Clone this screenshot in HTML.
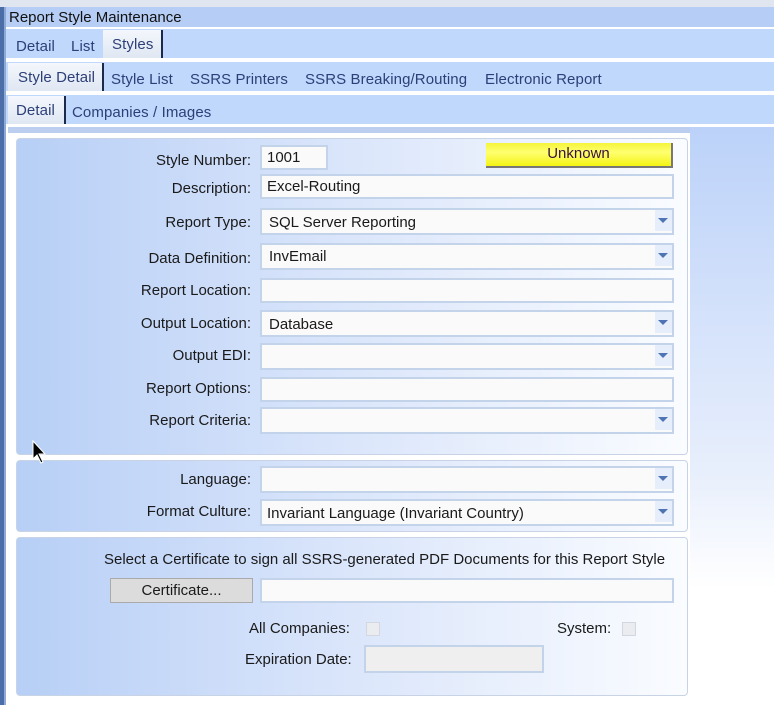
<!DOCTYPE html>
<html><head><style>
*{margin:0;padding:0;box-sizing:border-box}
body{width:774px;height:705px;position:relative;overflow:hidden;background:#fff;font-family:"Liberation Sans",sans-serif;font-size:15px;color:#1a1a1a}
.a{position:absolute}
.tabrow{position:absolute;left:6px;right:0;background:#bfd8fc}
.t{position:absolute;color:#2d3f78;font-size:15px;white-space:nowrap;letter-spacing:0.1px}
.sel{position:absolute;background:linear-gradient(#f4f7fc,#dfe7f3);border-right:2px solid #1c2a4a}
.panel{position:absolute;left:16px;width:672px;border:1px solid #c8d4e6;border-radius:4px;background:linear-gradient(90deg,#b7cff6 0%,#dbe6fb 50%,#fafcff 100%)}
.lbl{position:absolute;right:523px;text-align:right;white-space:nowrap;font-size:15px}
.in{position:absolute;background:#fafafa;border:2px solid #c3d3ea;height:25px;padding:2px 0 0 5px;font-size:15px;white-space:nowrap}
.dd::after{content:"";position:absolute;right:0;top:0;width:17px;height:21px;background:#e6eefb}
.dd::before{content:"";position:absolute;right:4px;top:8px;border-left:5px solid transparent;border-right:5px solid transparent;border-top:5px solid #4e74b4;z-index:1}
.cb{position:absolute;width:14px;height:14px;border:1px solid #d3d8e0;background:#eaecef}
</style></head><body>
<div class="a" style="left:0;top:0;width:774px;height:7px;background:#dfe6f0"></div>
<div class="a" style="left:0;top:7px;width:6px;height:698px;background:#4c6ea8;border-right:2px solid #8ea9d6"></div>
<div class="a" style="left:6px;top:7px;width:768px;height:20px;background:#b6cdf5"></div>
<div class="a" style="left:9px;top:9px;font-size:15px;color:#111">Report Style Maintenance</div>
<div class="tabrow" style="top:29px;height:29px"></div>
<div class="tabrow" style="top:62px;height:29px"></div>
<div class="tabrow" style="top:95px;height:29px"></div>
<div class="sel" style="left:103px;top:30px;width:60px;height:28px"></div>
<div class="t" style="left:16px;top:38px">Detail</div>
<div class="t" style="left:71px;top:38px">List</div>
<div class="t" style="left:112px;top:36px">Styles</div>
<div class="sel" style="left:8px;top:63px;width:96px;height:28px"></div>
<div class="t" style="left:18px;top:69px">Style Detail</div>
<div class="t" style="left:111px;top:71px">Style List</div>
<div class="t" style="left:190px;top:71px">SSRS Printers</div>
<div class="t" style="left:305px;top:71px">SSRS Breaking/Routing</div>
<div class="t" style="left:485px;top:71px">Electronic Report</div>
<div class="sel" style="left:8px;top:96px;width:58px;height:28px"></div>
<div class="t" style="left:16px;top:102px">Detail</div>
<div class="t" style="left:72px;top:104px">Companies / Images</div>
<div class="a" style="left:690px;top:127px;width:84px;height:578px;background:linear-gradient(#bcd2f9,#e8effc 60%,#fff 80%)"></div>
<div class="a" style="left:8px;top:127px;width:682px;height:6px;background:#bccff1"></div>

<div class="panel" style="top:138px;height:317px"></div>
<div class="panel" style="top:460px;height:72px"></div>
<div class="panel" style="top:537px;height:159px"></div>

<div class="lbl" style="top:152px">Style Number:</div>
<div class="in" style="left:260px;top:145px;width:68px">1001</div>
<div class="a" style="left:486px;top:143px;width:187px;height:25px;background:linear-gradient(#f4f43a,#ffff70 40%,#f4f414);border-right:2px solid #777;border-bottom:2px solid #777;text-align:center;padding-top:2px;color:#3a1040">Unknown</div>
<div class="lbl" style="top:180px">Description:</div>
<div class="in" style="left:260px;top:174px;width:414px">Excel-Routing</div>
<div class="lbl" style="top:214px">Report Type:</div>
<div class="in dd" style="left:260px;top:208px;width:414px;height:27px;padding-left:7px;padding-top:4px">SQL Server Reporting</div>
<div class="lbl" style="top:250px">Data Definition:</div>
<div class="in dd" style="left:260px;top:243px;width:414px;height:27px;padding-left:7px;padding-top:3px">InvEmail</div>
<div class="lbl" style="top:282px">Report Location:</div>
<div class="in" style="left:260px;top:278px;width:414px"></div>
<div class="lbl" style="top:315px">Output Location:</div>
<div class="in dd" style="left:260px;top:310px;width:414px;height:27px;padding-left:7px;padding-top:4px">Database</div>
<div class="lbl" style="top:347px">Output EDI:</div>
<div class="in dd" style="left:260px;top:343px;width:414px;height:27px"></div>
<div class="lbl" style="top:380px">Report Options:</div>
<div class="in" style="left:260px;top:377px;width:414px"></div>
<div class="lbl" style="top:412px">Report Criteria:</div>
<div class="in dd" style="left:260px;top:407px;width:414px;height:27px"></div>

<div class="lbl" style="top:471px">Language:</div>
<div class="in dd" style="left:260px;top:466px;width:414px;height:27px"></div>
<div class="lbl" style="top:503px">Format Culture:</div>
<div class="in dd" style="left:260px;top:499px;width:414px;height:27px;padding-top:4px">Invariant Language (Invariant Country)</div>

<div class="a" style="left:104px;top:551px;white-space:nowrap">Select a Certificate to sign all SSRS-generated PDF Documents for this Report Style</div>
<div class="a" style="left:110px;top:578px;width:143px;height:25px;background:#dcdcdc;border:1px solid #aaa;text-align:center;padding-top:3px">Certificate...</div>
<div class="in" style="left:260px;top:578px;width:414px"></div>
<div class="a" style="left:249px;top:620px">All Companies:</div>
<div class="cb" style="left:366px;top:622px"></div>
<div class="a" style="left:557px;top:620px">System:</div>
<div class="cb" style="left:622px;top:622px"></div>
<div class="a" style="left:245px;top:651px">Expiration Date:</div>
<div class="a" style="left:364px;top:645px;width:180px;height:28px;background:#efefef;border:2px solid #c3d3ea"></div>

<svg class="a" style="left:32px;top:440px" width="18" height="26" viewBox="0 0 18 26"><path d="M1 1 L1 19 L5 15 L9 23 L11 22 L7 14 L13 14 Z" fill="#000" stroke="#fff" stroke-width="1"/></svg>
</body></html>
